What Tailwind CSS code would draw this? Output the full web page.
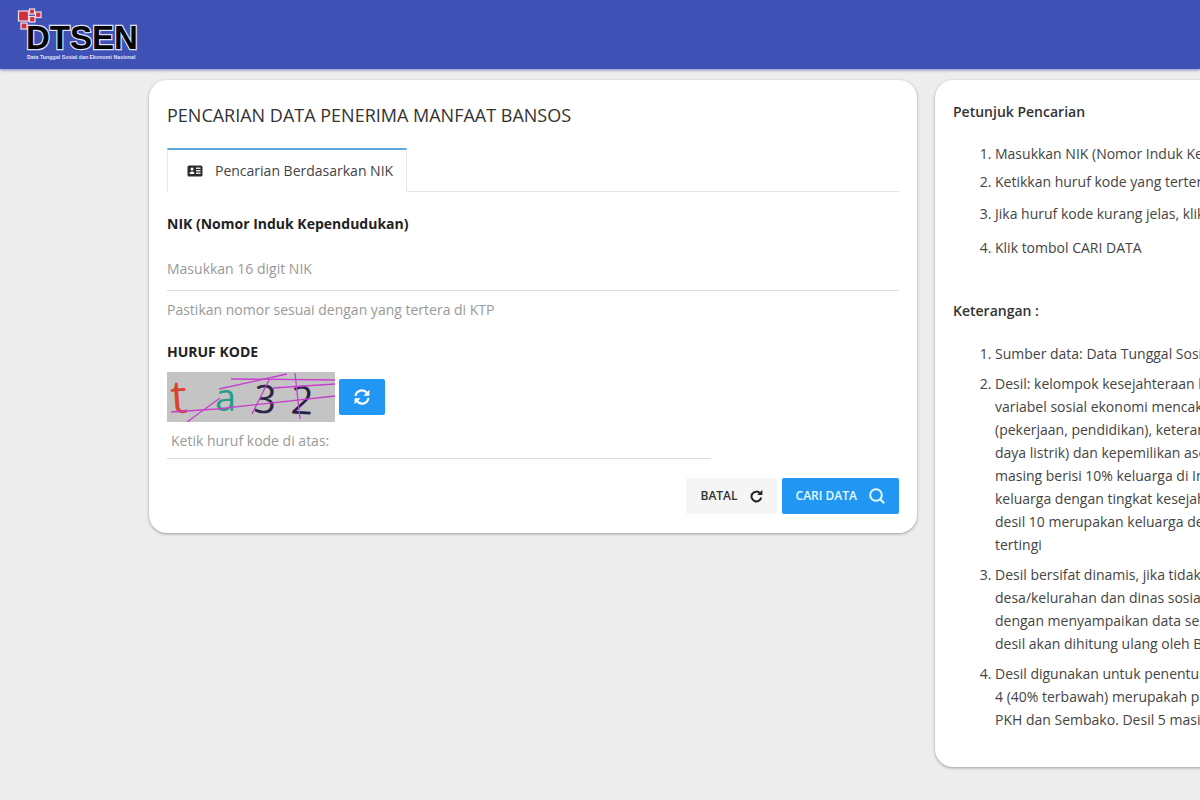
<!DOCTYPE html>
<html lang="id">
<head>
    <meta charset="UTF-8">
    <meta name="viewport" content="width=device-width, initial-scale=1.0">
    <title>Pencarian Data Penerima Manfaat Bansos</title>
    <script src="https://cdn.jsdelivr.net/npm/@tailwindcss/browser@4"></script>
</head>
<body class="min-h-screen overflow-x-hidden bg-[#ededed] font-['Open_Sans','Noto_Sans',sans-serif] text-sm text-[#444]">

    <!-- Header -->
    <header class="flex h-[69px] items-center bg-[#3f51b5] px-4 shadow-[0_1px_3px_#7986cb]">
        <a href="#" aria-label="DTSEN">
            <svg class="h-[58px] w-[124px]" viewBox="0 0 124 58">
                <text x="10" y="43" font-family="Liberation Sans, sans-serif" font-weight="bold" font-size="33" fill="#050505" stroke="#dfe3fa" stroke-width="2.4" paint-order="stroke">DTSEN</text>
                <g fill="#d32f3d" stroke="#f3dfe8" stroke-width="1.2">
                    <rect x="2.5" y="5" width="10" height="10"/>
                    <rect x="13.5" y="3" width="5" height="5"/>
                    <rect x="13.5" y="10.5" width="5.5" height="5.5"/>
                    <rect x="19.5" y="6" width="5.5" height="5.5"/>
                    <rect x="5" y="17" width="6" height="6"/>
                </g>
                <text x="11" y="53" font-family="Liberation Sans, sans-serif" font-weight="bold" font-size="5.3" fill="#dfe3fa">Data Tunggal Sosial dan Ekonomi Nasional</text>
            </svg>
        </a>
    </header>

    <main class="flex items-start gap-[18px] overflow-hidden pt-[11px] pb-8 pl-[149px]">

        <!-- Form pencarian -->
        <section class="min-w-0 flex-1 rounded-[18px] bg-white px-[18px] pt-5 pb-[19px] shadow-[0_1px_3px_rgba(0,0,0,0.35)]">
            <h1 class="text-lg leading-[30px] text-[#333]">PENCARIAN DATA PENERIMA MANFAAT BANSOS</h1>

            <div class="mt-[18px] flex">
                <button type="button" class="flex h-11 w-60 items-center gap-3 border-x border-t-2 border-x-[#e8e8e8] border-t-[#5aa9d6] pl-[19px]">
                    <svg class="h-3 w-4" viewBox="0 0 16 12">
                        <rect x="0.5" y="0.5" width="15" height="11" rx="1.5" fill="#2b2b2b"/>
                        <circle cx="5" cy="4" r="1.5" fill="#fff"/>
                        <path d="M2.8 9 V7.5 Q5 5.5 7.2 7.5 V9Z" fill="#fff"/>
                        <path d="M9 3.3H13.5M9 5.8H13.5M9 8.3H13.5" stroke="#ddd" stroke-width="1.5"/>
                    </svg>
                    Pencarian Berdasarkan NIK
                </button>
                <div class="flex-1 border-b border-[#e4e4e4]"></div>
            </div>

            <form>
                <label for="nik" class="mt-5 block leading-6 font-bold text-[#222]">NIK (Nomor Induk Kependudukan)</label>
                <input id="nik" type="text" maxlength="16" placeholder="Masukkan 16 digit NIK" class="mt-[11px] block h-11 w-full border-b border-[#dcdcdc] placeholder:text-[#999] focus:outline-none">
                <p class="mt-[7px] leading-6 text-[#999]">Pastikan nomor sesuai dengan yang tertera di KTP</p>

                <label for="kode" class="mt-[18px] block leading-6 font-bold text-[#222]">HURUF KODE</label>
                <div class="mt-2 flex items-center gap-1">
                    <!-- Captcha -->
                    <svg class="h-[50px] w-[168px] bg-[#c4c4c4]" viewBox="0 0 168 50" font-family="Open Sans, sans-serif" font-size="37">
                        <text x="4" y="41" fill="#d8432f" font-weight="500" font-size="46" transform="rotate(-4 12 30)">t</text>
                        <text x="48" y="39" fill="#2b9c85" font-weight="500" font-size="38">a</text>
                        <text x="87" y="41" fill="#2d2547" font-weight="500" font-size="39" transform="rotate(4 98 28)">3</text>
                        <text x="124" y="42" fill="#232145" font-weight="500" font-size="39" transform="rotate(3 135 28)">2</text>
                        <g fill="none" stroke="#c83fd0" stroke-width="1.3">
                            <path d="M4 40 L50 37 L168 24"/>
                            <path d="M20 50 L53 26"/>
                            <path d="M52 17 L120 2"/>
                            <path d="M64 7 L168 8"/>
                            <path d="M106 16 L168 12"/>
                            <path d="M128 1 L133 47"/>
                            <path d="M85 42 L102 8"/>
                        </g>
                    </svg>
                    <button type="button" aria-label="Muat ulang kode" class="flex h-9 w-[46px] items-center justify-center rounded-xs bg-[#2196f3]">
                        <svg class="h-4 w-4" viewBox="0 0 16 16">
                            <g fill="none" stroke="#fff" stroke-width="2.2">
                                <path d="M1.6 7 A6.3 6.3 0 0 1 12.8 3.8"/>
                                <path d="M14.4 9 A6.3 6.3 0 0 1 3.2 12.2"/>
                            </g>
                            <path d="M15.4 0.8 V6.8 H9.4Z M0.6 15.2 V9.2 H6.6Z" fill="#fff"/>
                        </svg>
                    </button>
                </div>
                <input id="kode" type="text" placeholder="Ketik huruf kode di atas:" class="block h-[37px] w-[544px] max-w-full border-b border-[#dcdcdc] px-1 placeholder:text-[#999] focus:outline-none">

                <div class="mt-[19px] flex justify-end gap-[5px] text-xs font-semibold">
                    <button type="reset" class="flex h-9 items-center gap-3 rounded-xs bg-[#f5f5f5] px-[14px] text-[#333]">
                        BATAL
                        <svg class="h-[14px] w-[13px]" viewBox="0 0 13 14">
                            <path d="M10 4.2 A4.9 4.9 0 1 0 11.2 8.5" fill="none" stroke="#222" stroke-width="2"/>
                            <path d="M12.4 0.8 V6 H7.2Z" fill="#222"/>
                        </svg>
                    </button>
                    <button type="submit" class="flex h-9 items-center gap-3 rounded-xs bg-[#2196f3] px-[14px] text-[#e3fbff]">
                        CARI DATA
                        <svg class="h-4 w-4" viewBox="0 0 16 16" fill="none" stroke="#e3fbff" stroke-width="2">
                            <circle cx="7" cy="7" r="5.8"/>
                            <path d="M11.2 11.2 L15.2 15.2"/>
                        </svg>
                    </button>
                </div>
            </form>
        </section>

        <!-- Petunjuk dan keterangan, sisi kanan melewati tepi layar -->
        <aside class="-mr-6 w-[289px] shrink-0 overflow-hidden rounded-[18px] bg-white pt-5 pb-9 pl-[18px] whitespace-nowrap shadow-[0_1px_3px_rgba(0,0,0,0.35)]">
            <h2 class="leading-6 font-semibold text-[#333]">Petunjuk Pencarian</h2>
            <ol class="mt-[18px] list-decimal pl-[42px] leading-6">
                <li>Masukkan NIK (Nomor Induk Kependudukan)</li>
                <li class="mt-1">Ketikkan huruf kode yang tertera</li>
                <li class="mt-2">Jika huruf kode kurang jelas, klik</li>
                <li class="mt-[10px]">Klik tombol CARI DATA</li>
            </ol>

            <h2 class="mt-[39px] leading-6 font-semibold text-[#333]">Keterangan :</h2>
            <ol class="mt-[19px] list-decimal space-y-[7px] pl-[42px] leading-[23px]">
                <li>Sumber data: Data Tunggal Sosial</li>
                <li>Desil: kelompok kesejahteraan keluarga<br>
                    variabel sosial ekonomi mencakup<br>
                    (pekerjaan, pendidikan), keterangan<br>
                    daya listrik) dan kepemilikan aset<br>
                    masing berisi 10% keluarga di Indonesia<br>
                    keluarga dengan tingkat kesejahteraan<br>
                    desil 10 merupakan keluarga dengan<br>
                    tertingi</li>
                <li>Desil bersifat dinamis, jika tidak<br>
                    desa/kelurahan dan dinas sosial<br>
                    dengan menyampaikan data sesuai<br>
                    desil akan dihitung ulang oleh BPS</li>
                <li>Desil digunakan untuk penentuan<br>
                    4 (40% terbawah) merupakah prioritas<br>
                    PKH dan Sembako. Desil 5 masih</li>
            </ol>
        </aside>
    </main>
</body>
</html>
